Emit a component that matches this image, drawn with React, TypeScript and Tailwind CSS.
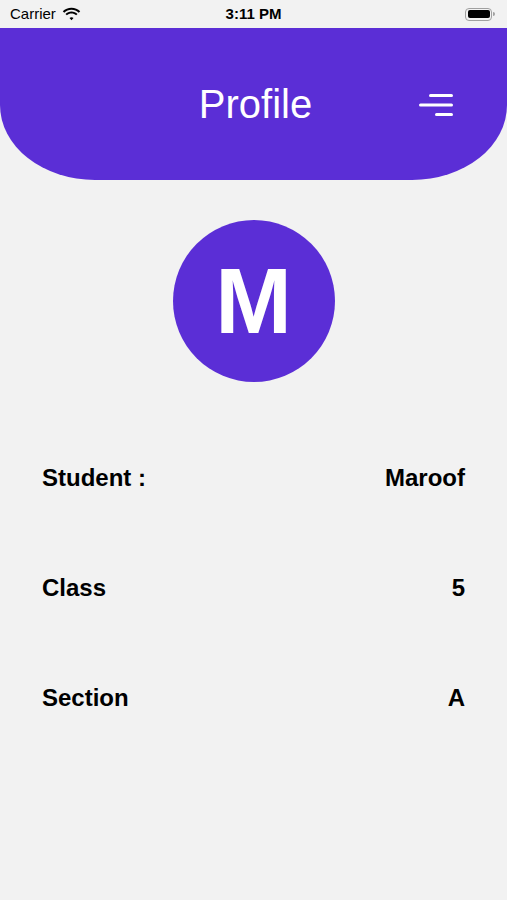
const font = { fontFamily: '"Liberation Sans", Arial, sans-serif' };

function StatusBar() {
  return (
    <div className="grid h-[28px] grid-cols-3 items-center bg-[#f2f2f2] px-[10px] text-[15px] text-black">
      <div className="flex items-center gap-[6px]">
        <span>Carrier</span>
        <svg width="19" height="14" viewBox="0 0 17 12">
          <path d="M8.5 2.2c2.5 0 4.8 1 6.5 2.6l1.3-1.3C14.3 1.5 11.5.3 8.5.3S2.7 1.5.7 3.5L2 4.8c1.7-1.6 4-2.6 6.5-2.6z" fill="#000" />
          <path d="M8.5 5.6c1.6 0 3 .6 4.1 1.6l1.3-1.3c-1.4-1.3-3.3-2.2-5.4-2.2S4.5 4.6 3.1 5.9l1.3 1.3c1.1-1 2.5-1.6 4.1-1.6z" fill="#000" />
          <path d="M8.5 8.9c.7 0 1.3.3 1.8.7l-1.8 1.9-1.8-1.9c.5-.4 1.1-.7 1.8-.7z" fill="#000" />
        </svg>
      </div>
      <div className="text-center font-semibold">3:11 PM</div>
      <div className="flex justify-end pr-[2px]">
        <div className="flex items-center">
          <div className="flex h-[13px] w-[27px] items-center rounded-[4px] border border-[#a0a0a0] p-[1.5px]">
            <div className="h-full w-full rounded-[2px] bg-black" />
          </div>
          <div className="ml-[1px] h-[4px] w-[1.5px] rounded-r-sm bg-[#a0a0a0]" />
        </div>
      </div>
    </div>
  );
}

function MenuIcon() {
  return (
    <svg width="36" height="26" viewBox="0 0 36 26">
      <rect x="10" y="2" width="24" height="3" rx="1.5" fill="#fff" />
      <rect x="0" y="11.5" width="34" height="3" rx="1.5" fill="#fff" />
      <rect x="16" y="21" width="18" height="3" rx="1.5" fill="#fff" />
    </svg>
  );
}

function InfoRow({ label, value }: { label: string; value: string }) {
  return (
    <div className="flex h-[110px] items-center justify-between text-[24px] font-bold text-black">
      <span>{label}</span>
      <span>{value}</span>
    </div>
  );
}

export default function App() {
  return (
    <div className="min-h-[900px] w-full bg-[#f2f2f2]" style={font}>
      <StatusBar />
      <header className="grid h-[152px] grid-cols-[1fr_auto_1fr] items-center rounded-b-[95px_75px] bg-[#5b2ed6]">
        <div />
        <h1 className="pl-[4px] text-[40px] font-normal text-white">Profile</h1>
        <div className="flex justify-end pr-[52px] pt-[2px]">
          <MenuIcon />
        </div>
      </header>

      <div className="mt-[40px] flex justify-center">
        <div className="flex h-[162px] w-[162px] items-center justify-center rounded-full bg-[#5b2ed6]">
          <span className="text-[92px] font-bold leading-none text-white">M</span>
        </div>
      </div>

      <div className="mt-[41px] px-[42px]">
        <InfoRow label="Student :" value="Maroof" />
        <InfoRow label="Class" value="5" />
        <InfoRow label="Section" value="A" />
      </div>
    </div>
  );
}
